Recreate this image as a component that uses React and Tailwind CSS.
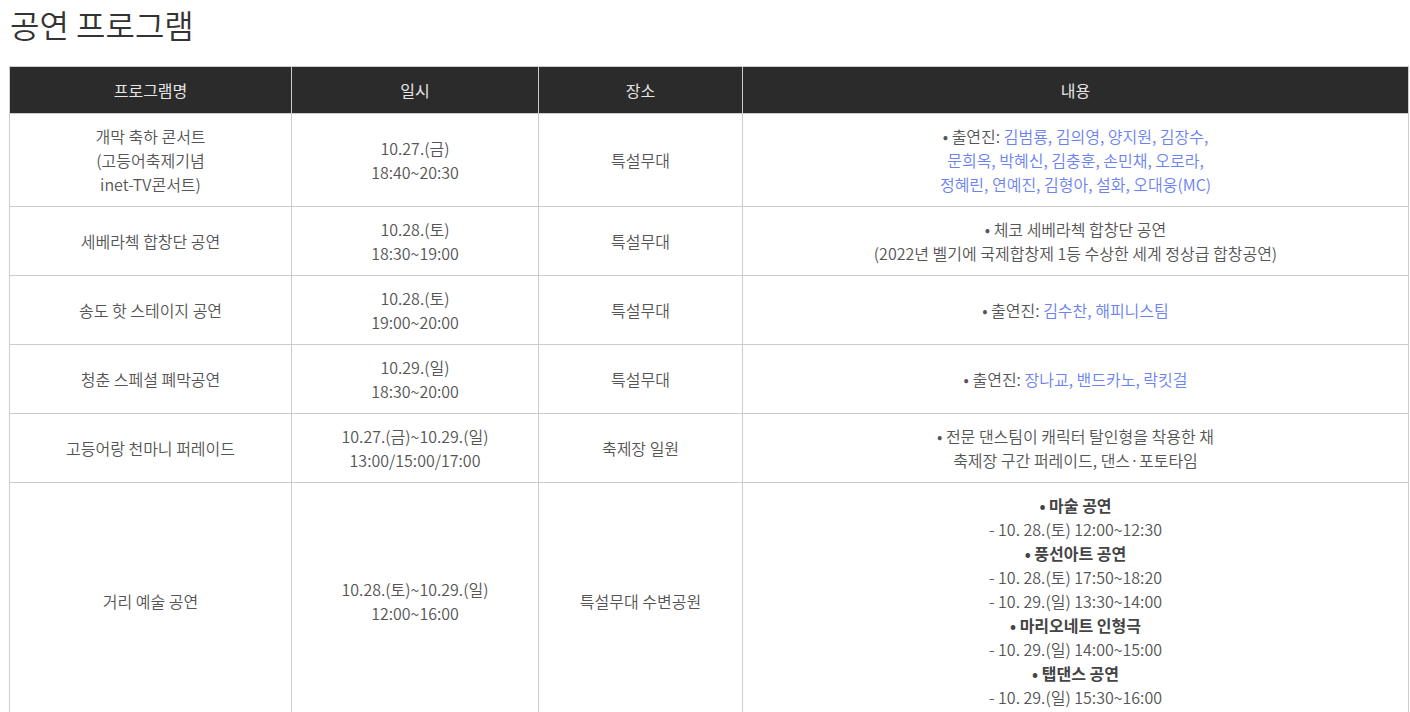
import React from 'react'

const rows = [
  {
    name: ['개막 축하 콘서트', '(고등어축제기념', 'inet-TV콘서트)'],
    date: ['10.27.(금)', '18:40~20:30'],
    place: '특설무대',
    content: (
      <>
        • 출연진: <span className="text-[#6b82f2]">김범룡, 김의영, 양지원, 김장수,</span>
        <br />
        <span className="text-[#6b82f2]">문희옥, 박혜신, 김충훈, 손민채, 오로라,</span>
        <br />
        <span className="text-[#6b82f2]">정혜린, 연예진, 김형아, 설화, 오대웅(MC)</span>
      </>
    ),
  },
  {
    name: ['세베라첵 합창단 공연'],
    date: ['10.28.(토)', '18:30~19:00'],
    place: '특설무대',
    content: (
      <>
        • 체코 세베라첵 합창단 공연
        <br />
        (2022년 벨기에 국제합창제 1등 수상한 세계 정상급 합창공연)
      </>
    ),
  },
  {
    name: ['송도 핫 스테이지 공연'],
    date: ['10.28.(토)', '19:00~20:00'],
    place: '특설무대',
    content: (
      <>
        • 출연진: <span className="text-[#6b82f2]">김수찬, 해피니스팀</span>
      </>
    ),
  },
  {
    name: ['청춘 스페셜 폐막공연'],
    date: ['10.29.(일)', '18:30~20:00'],
    place: '특설무대',
    content: (
      <>
        • 출연진: <span className="text-[#6b82f2]">장나교, 밴드카노, 락킷걸</span>
      </>
    ),
  },
  {
    name: ['고등어랑 천마니 퍼레이드'],
    date: ['10.27.(금)~10.29.(일)', '13:00/15:00/17:00'],
    place: '축제장 일원',
    content: (
      <>
        • 전문 댄스팀이 캐릭터 탈인형을 착용한 채
        <br />
        축제장 구간 퍼레이드, 댄스·포토타임
      </>
    ),
  },
  {
    name: ['거리 예술 공연'],
    date: ['10.28.(토)~10.29.(일)', '12:00~16:00'],
    place: '특설무대 수변공원',
    content: (
      <>
        <b className="font-bold text-[#444]">• 마술 공연</b>
        <br />- 10. 28.(토) 12:00~12:30
        <br />
        <b className="font-bold text-[#444]">• 풍선아트 공연</b>
        <br />- 10. 28.(토) 17:50~18:20
        <br />- 10. 29.(일) 13:30~14:00
        <br />
        <b className="font-bold text-[#444]">• 마리오네트 인형극</b>
        <br />- 10. 29.(일) 14:00~15:00
        <br />
        <b className="font-bold text-[#444]">• 탭댄스 공연</b>
        <br />- 10. 29.(일) 15:30~16:00
      </>
    ),
  },
]

const td = 'border border-[#cccccc] px-2 py-[10px] text-center align-middle'

export default function App() {
  return (
    <div
      className="bg-white px-[9px] pt-[2px] text-[16px] leading-6 text-[#555] font-[350]"
      style={{ fontFamily: '"Noto Sans CJK KR", "Noto Sans", sans-serif' }}
    >
      <h2 className="text-[32px] leading-[44px] text-[#333] font-[350] pl-[1px]">공연 프로그램</h2>
      <table className="mt-[20px] w-[1400px] border-collapse table-fixed">
        <colgroup>
          <col className="w-[282px]" />
          <col className="w-[247px]" />
          <col className="w-[204px]" />
          <col />
        </colgroup>
        <thead>
          <tr className="bg-[#2b2b2b] text-[#e6e6e6]">
            {['프로그램명', '일시', '장소', '내용'].map((h) => (
              <th key={h} className="border border-[#cccccc] py-[11px] font-normal text-center">
                {h}
              </th>
            ))}
          </tr>
        </thead>
        <tbody>
          {rows.map((r, i) => (
            <tr key={i}>
              <td className={td}>
                {r.name.map((l, j) => (
                  <div key={j}>{l}</div>
                ))}
              </td>
              <td className={td}>
                {r.date.map((l, j) => (
                  <div key={j}>{l}</div>
                ))}
              </td>
              <td className={td}>{r.place}</td>
              <td className={td}>{r.content}</td>
            </tr>
          ))}
        </tbody>
      </table>
    </div>
  )
}
